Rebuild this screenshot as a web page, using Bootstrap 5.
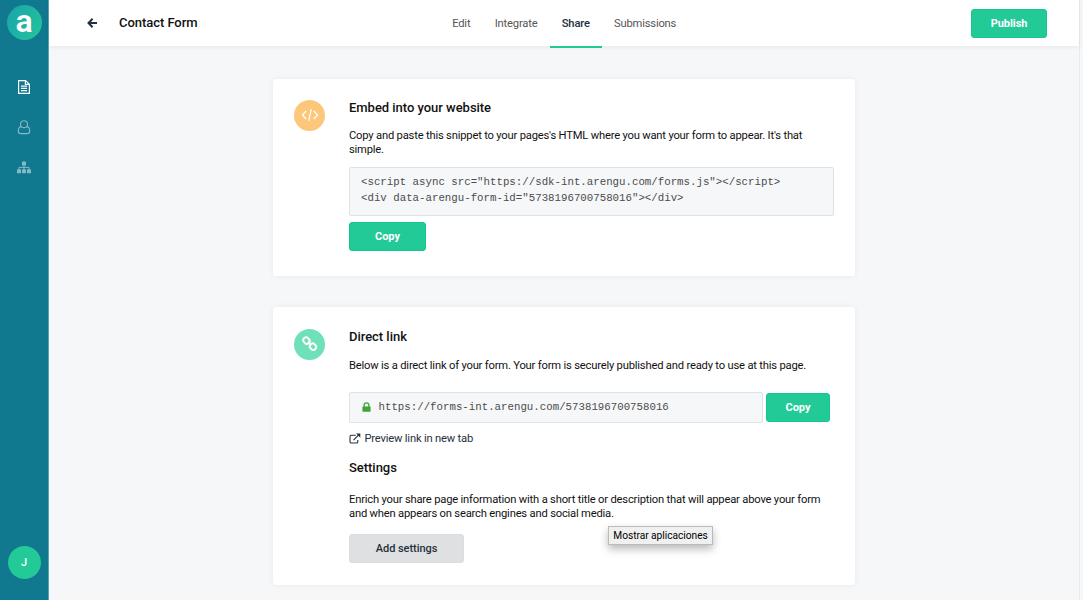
<!DOCTYPE html>
<html lang="en">
<head>
<meta charset="utf-8">
<meta name="viewport" content="width=device-width, initial-scale=1">
<title>Contact Form - Share</title>
<link href="https://cdn.jsdelivr.net/npm/bootstrap@5.3.0/dist/css/bootstrap.min.css" rel="stylesheet">
<style>
body{font-family:Roboto,"Liberation Sans",sans-serif;font-size:11.2px;letter-spacing:-.19px;line-height:14px;color:#111;background:#f6f7f9;height:600px;overflow:hidden}
.side{width:49px;background:#10788f;border-right:1px solid #5ea3b3}
.logo,.avatar{width:35px;height:35px;color:#fff}
.logo{margin-top:5px;background:linear-gradient(120deg,#1ba3ab,#24c59b)}
.logo span{font:600 32px/40px Roboto,"Liberation Sans",sans-serif;margin-top:-4px}
.avatar{width:33px;height:33px;background:#22ca98;font-weight:500;font-size:11px;margin-bottom:21px}
.side-link{height:40px;color:#fff}
.side-link.dim{color:#86bac6}
.main-area{border-right:1px solid #e9eaec;margin-right:3px}
.topbar{height:46px;background:#fff;box-shadow:0 1px 5px rgba(0,0,0,.07);padding:0 32px 0 38px}
.form-name{font-size:13px;font-weight:500;width:333px;margin-left:21px;letter-spacing:-.05px}
.tabs .nav-link{height:48px;padding:17px 12.2px 0;color:#555;font-size:11.2px;line-height:14px;border-bottom:2px solid transparent}
.tabs .nav-link.active{color:#25303d;font-weight:500;border-color:#22ca98}
.btn{--bs-btn-font-size:11px;--bs-btn-line-height:15px;--bs-btn-border-radius:3px;--bs-btn-padding-y:0;--bs-btn-padding-x:0;--bs-btn-font-weight:700;height:29px;letter-spacing:-.05px}
.btn-go{--bs-btn-color:#fff;--bs-btn-bg:#22ca98;--bs-btn-border-color:#16c58f;--bs-btn-hover-bg:#1db889;--bs-btn-hover-color:#fff}
.btn-soft{--bs-btn-color:#25303d;--bs-btn-bg:#dfe0e2;--bs-btn-border-color:#dcdde0;--bs-btn-hover-bg:#d2d3d6;--bs-btn-font-weight:500;width:115px}
.panel{width:582px;border:0;border-radius:3px;box-shadow:0 0 7px rgba(0,0,0,.06);padding:21px 21px 0;margin-left:224px}
.disc{width:31px;height:31px;margin-right:24px}
h2{font-size:13px;line-height:16px;font-weight:500;margin:0;letter-spacing:-.03px}
.snippet{font-family:"Liberation Mono",monospace;font-size:10.75px;letter-spacing:0;line-height:16px;color:#4c4c4c;background:#f6f7f9;border:1px solid #dce2e6;border-radius:2px}
.os-tip{left:608px;top:526px;width:105px;height:19px;background:#f0f0f0;border:1px solid #bbb;box-shadow:0 4px 9px rgba(0,0,0,.28);font-size:10.2px;letter-spacing:-.03px;line-height:17px;color:#000}
</style>
</head>
<body class="d-flex">
<aside class="side d-flex flex-column align-items-center flex-shrink-0">
  <div class="logo rounded-circle d-flex align-items-center justify-content-center"><span>a</span></div>
  <nav class="d-flex flex-column" style="margin-top:27px">
    <a class="side-link d-flex align-items-center" href="#" aria-label="Forms"><svg width="14" height="16" viewBox="0 0 14 16" fill="none" stroke="currentColor" stroke-width="1.2"><path d="M1.6 1.6h7l3.8 3.6v9.2H1.6zM8.4 1.6v3.8h4M4 7.2h6M4 9.4h6M4 11.6h6"/></svg></a>
    <a class="side-link dim d-flex align-items-center" href="#" aria-label="Users"><svg width="14" height="16" viewBox="0 0 14 16" fill="none" stroke="currentColor" stroke-width="1.1"><circle cx="7" cy="5.2" r="3.5"/><path d="M4.1 7.4C2 8 1.3 10.1 1.3 12c0 1.7 1 2.6 2.4 2.6h6.6c1.4 0 2.4-.9 2.4-2.6 0-1.9-.7-4-2.8-4.6"/></svg></a>
    <a class="side-link dim d-flex align-items-center" href="#" aria-label="Flows"><svg width="14" height="16" viewBox="0 0 14 16" fill="currentColor"><rect x="5" y="2.4" width="4" height="4" rx=".6"/><rect x="0" y="10.3" width="4" height="4" rx=".6"/><rect x="5" y="10.3" width="4" height="4" rx=".6"/><rect x="10" y="10.3" width="4" height="4" rx=".6"/><path d="M7 6V10.6M2 10.6V8.4h10v2.2" fill="none" stroke="currentColor"/></svg></a>
  </nav>
  <div class="avatar rounded-circle d-flex align-items-center justify-content-center mt-auto">J</div>
</aside>
<div class="main-area flex-grow-1">
  <header class="topbar d-flex align-items-center">
    <svg width="11" height="10" viewBox="0 0 11 10" fill="none" stroke="#25303d" stroke-width="2"><path d="M5.6.8 1.5 5l4.1 4.2M1.7 5h8.3"/></svg>
    <h1 class="form-name mb-0">Contact Form</h1>
    <nav class="nav tabs align-self-start flex-nowrap" style="margin-left:-12px">
      <a class="nav-link" href="#">Edit</a><a class="nav-link" href="#">Integrate</a><a class="nav-link active" href="#">Share</a><a class="nav-link" href="#">Submissions</a>
    </nav>
    <button class="btn btn-go ms-auto" style="width:76px">Publish</button>
  </header>
  <main>
    <section class="card panel flex-row align-items-start" style="height:197px;margin-top:32.5px">
      <div class="disc rounded-circle d-flex align-items-center justify-content-center flex-shrink-0" style="background:#fdc77b"><svg width="18" height="14" viewBox="0 0 18 14" fill="none" stroke="#fff" stroke-width="1.2"><path d="M5.2 3 1.4 7l3.8 4M12.8 3l3.8 4-3.8 4M10.3 1.2 7.7 12.8"/></svg></div>
      <div class="flex-grow-1">
        <h2>Embed into your website</h2>
        <p class="mb-0 text-nowrap" style="margin-top:13px">Copy and paste this snippet to your pages's HTML where you want your form to appear. It's that<br>simple.</p>
        <div class="snippet text-nowrap" style="height:49px;margin-top:10px;padding:6px 11px">&lt;script async src="https://sdk-int.arengu.com/forms.js"&gt;&lt;/script&gt;<br>&lt;div data-arengu-form-id="5738196700758016"&gt;&lt;/div&gt;</div>
        <button class="btn btn-go d-block" style="width:77px;margin-top:6px">Copy</button>
      </div>
    </section>
    <section class="card panel flex-row align-items-start" style="height:278px;margin-top:31.5px;padding-top:22px">
      <div class="disc rounded-circle d-flex align-items-center justify-content-center flex-shrink-0" style="background:#6fe1b9"><svg width="18" height="18" viewBox="0 0 18 18" fill="none" stroke="#fff" stroke-width="1.9" style="margin-top:-2px"><rect x="2.2" y="2.7" width="6.5" height="5.6" rx="2.4" transform="rotate(45 5.4 5.5)"/><rect x="8.7" y="8.9" width="6.5" height="5.6" rx="2.4" transform="rotate(45 12 11.7)"/><path d="m6.9 7 3.5 3.4"/></svg></div>
      <div class="flex-grow-1">
        <h2>Direct link</h2>
        <p class="mb-0 text-nowrap" style="margin-top:14px">Below is a direct link of your form. Your form is securely published and ready to use at this page.</p>
        <div class="d-flex align-items-center" style="margin-top:19px;gap:3px">
          <div class="snippet d-flex align-items-center" style="width:414px;height:31px;padding:0 0 2px 12px"><svg width="9" height="10" viewBox="0 0 9 10" style="margin:1px 7.5px 0 0"><path d="M2.1 5V3.2a2.4 2.4 0 0 1 4.8 0V5" fill="none" stroke="#3fa535" stroke-width="1.3"/><rect x=".4" y="4.4" width="8.2" height="5.4" rx=".7" fill="#3fa535"/></svg>https://forms-int.arengu.com/5738196700758016</div>
          <button class="btn btn-go" style="width:64px">Copy</button>
        </div>
        <a class="d-flex align-items-center text-decoration-none" style="margin-top:9px;gap:3.5px;color:#25303d" href="#"><svg width="12" height="12" viewBox="0 0 12 12" fill="none" stroke="currentColor" stroke-width="1.1"><path d="M6.8 2.3H2.4Q1 2.3 1 3.7v5Q1 10 2.4 10h5q1.4 0 1.4-1.3V7.1M4.5 7.2 10 1.7" /><path d="M7.2.6h4.1v4.1z" fill="currentColor" stroke="none"/></svg><span>Preview link in new tab</span></a>
        <h2 style="margin-top:14px">Settings</h2>
        <p class="mb-0 text-nowrap" style="margin-top:17px">Enrich your share page information with a short title or description that will appear above your form<br>and when appears on search engines and social media.</p>
        <button class="btn btn-soft d-block" style="margin-top:13px">Add settings</button>
      </div>
    </section>
  </main>
</div>
<div class="os-tip position-absolute text-center text-nowrap">Mostrar aplicaciones</div>
<script src="https://cdn.jsdelivr.net/npm/bootstrap@5.3.0/dist/js/bootstrap.bundle.min.js"></script>
</body>
</html>
